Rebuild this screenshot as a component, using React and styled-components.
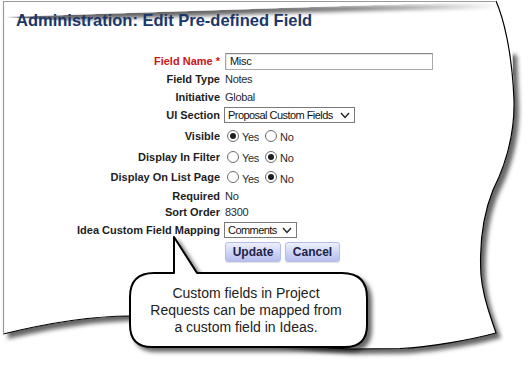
import styled, { createGlobalStyle } from "styled-components";

const GlobalStyle = createGlobalStyle`
  html, body { margin:0; padding:0; background:#fff; }
  body { font-family: "Liberation Sans", Arial, sans-serif; }
`

const Page = styled.div`
  position:relative;
  width:530px;
  height:367px;
  overflow:hidden;
  box-sizing:border-box;
  padding-top:10px;
`
const Paper = styled.svg`
  position:absolute;
  left:0;
  top:0;
  width:530px;
  height:367px;
`
const Title = styled.h1`
  position:relative;
  margin:0 0 0 16px;
  font-size:16.5px;
  line-height:20px;
  font-weight:bold;
  color:#1b3769;
`
const Form = styled.div`
  position:relative;
  margin-top:22px;
  display:flex;
  flex-direction:column;
`
const Row = styled.div`
  display:flex;
  align-items:${p => p.align || "center"};
  height:${p => p.h}px;
`
const Label = styled.div`
  width:220px;
  flex:none;
  text-align:right;
  font-size:11px;
  font-weight:bold;
  color:${p => p.required ? "#cc1616" : "#1e1e1e"};
`
const Value = styled.div`
  margin-left:5px;
  display:flex;
  align-items:center;
  gap:4px;
  font-size:11px;
  letter-spacing:-0.3px;
  color:#2a2a2a;
`
const TextInput = styled.div`
  width:208px;
  height:17px;
  box-sizing:border-box;
  border:1px solid #a9a9a9;
  border-top-color:#8a8a8a;
  box-shadow:inset 1px 1px 0 #e4e4e4;
  padding:0 4px;
  line-height:15px;
  font-size:11px;
  color:#111;
`
const SelectBox = styled.div`
  width:${p => p.w}px;
  height:16px;
  margin-left:-1px;
  box-sizing:border-box;
  border:1px solid #7a7a7a;
  padding:0 4px 0 3px;
  display:flex;
  align-items:center;
  justify-content:space-between;
  font-size:11px;
  letter-spacing:-0.55px;
  color:#111;
`
const Chevron = () => (
  <svg width="10" height="7" viewBox="0 0 10 7">
    <polyline points="1,1 5,5.5 9,1" fill="none" stroke="#222" strokeWidth="1.4" />
  </svg>
)
const RadioGroup = styled.div`
  display:flex;
  align-items:center;
  margin-left:2px;
`
const Radio = styled.span`
  width:12px;
  height:12px;
  box-sizing:border-box;
  border:1px solid #6c6c6c;
  border-radius:50%;
  background:#fff;
  display:inline-flex;
  align-items:center;
  justify-content:center;
  &::after {
    content:"";
    width:6px;
    height:6px;
    border-radius:50%;
    background:${p => p.checked ? "#1e1e1e" : "transparent"};
  }
`
const RadioText = styled.span`
  margin:3px 6px 0 3px;
  font-size:11px;
  color:#2a2a2a;
`
const Button = styled.button`
  width:${p => p.w}px;
  height:20px;
  padding:0;
  border:1px solid #b4bce8;
  border-radius:3px;
  background:linear-gradient(#eef0fc, #cdd3f4 55%, #b6bfee);
  box-shadow:0 1px 1px rgba(0,0,0,0.12);
  font-family:inherit;
  font-size:12px;
  font-weight:bold;
  color:#1c2448;
`
const Callout = styled.div`
  position:absolute;
  left:126px;
  top:233px;
  width:250px;
  height:125px;
`
const CalloutShape = styled.svg`
  position:absolute;
  left:0;
  top:0;
  width:250px;
  height:125px;
`
const CalloutText = styled.p`
  position:relative;
  margin:0 0 0 4px;
  padding-top:52px;
  width:232px;
  text-align:center;
  font-size:14px;
  line-height:17px;
  color:#222;
`

const YesNo = ({ yes }) => (
  <RadioGroup>
    <Radio checked={yes} />
    <RadioText>Yes</RadioText>
    <Radio checked={!yes} />
    <RadioText>No</RadioText>
  </RadioGroup>
)

const edge = "M496,1 C503,17 512,50 514,100 C515,140 503,170 493,190 C485,210 479,240 481,275 C483,300 492,320 496,333 C470,340 430,347 400,348.5 L350,349 C250,345 180,316 130,316 C90,316 40,325 3,334"

export default function App() {
  return (
    <Page>
      <GlobalStyle />
      <Paper viewBox="0 0 530 367">
        <defs>
          <filter id="shadow" x="-5%" y="-5%" width="115%" height="120%">
            <feDropShadow dx="5" dy="5" stdDeviation="2.2" floodColor="#000" floodOpacity="0.6" />
          </filter>
        </defs>
        <path d={`M3,2 L496,1 ${edge.slice(10)} Z`} fill="#fff" filter="url(#shadow)" />
        <path d={edge} fill="none" stroke="#000" strokeWidth="1.2" />
        <path d="M3.5,334 L3.5,1.5 L496,1.5" fill="none" stroke="#9a9a9a" strokeWidth="1.2" />
      </Paper>

      <Title>Administration: Edit Pre-defined Field</Title>

      <Form>
        <Row h={18}>
          <Label required>Field Name *</Label>
          <Value><TextInput>Misc</TextInput></Value>
        </Row>
        <Row h={18}>
          <Label>Field Type</Label>
          <Value>Notes</Value>
        </Row>
        <Row h={17}>
          <Label>Initiative</Label>
          <Value>Global</Value>
        </Row>
        <Row h={20}>
          <Label>UI Section</Label>
          <Value><SelectBox w={131}>Proposal Custom Fields <Chevron /></SelectBox></Value>
        </Row>
        <Row h={21}>
          <Label>Visible</Label>
          <Value><YesNo yes /></Value>
        </Row>
        <Row h={21}>
          <Label>Display In Filter</Label>
          <Value><YesNo /></Value>
        </Row>
        <Row h={20}>
          <Label>Display On List Page</Label>
          <Value><YesNo /></Value>
        </Row>
        <Row h={17}>
          <Label>Required</Label>
          <Value>No</Value>
        </Row>
        <Row h={16}>
          <Label>Sort Order</Label>
          <Value>8300</Value>
        </Row>
        <Row h={20}>
          <Label>Idea Custom Field Mapping</Label>
          <Value><SelectBox w={73}>Comments <Chevron /></SelectBox></Value>
        </Row>
        <Row h={22} align="flex-end">
          <Label />
          <Value>
            <Button w={56}>Update</Button>
            <Button w={55}>Cancel</Button>
          </Value>
        </Row>
      </Form>

      <Callout>
        <CalloutShape viewBox="0 0 250 125">
          <defs>
            <filter id="cshadow" x="-10%" y="-10%" width="125%" height="130%">
              <feDropShadow dx="4" dy="4" stdDeviation="2" floodColor="#000" floodOpacity="0.6" />
            </filter>
          </defs>
          <path
            d="M48,40 L48,4 L71,40 L216,40 Q241,40 241,65 L241,92 Q241,114 219,114 L26,114 Q4,114 4,92 L4,64 Q4,40 28,40 Z"
            fill="#fff"
            stroke="#000"
            strokeWidth="2"
            strokeLinejoin="round"
            filter="url(#cshadow)"
          />
        </CalloutShape>
        <CalloutText>
          Custom fields in Project<br />
          Requests can be mapped from<br />
          a custom field in Ideas.
        </CalloutText>
      </Callout>
    </Page>
  );
}
